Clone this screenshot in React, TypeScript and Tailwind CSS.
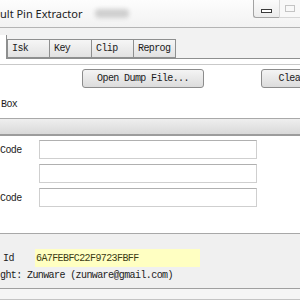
import React from "react";

const mono = "font-['Liberation_Mono',monospace] text-[10px] tracking-[-0.6px] text-[#1b1b1b]";

const Tab = ({ label }: { label: string }) => (
    <div className="-ml-px h-[19px] w-[43px] shrink-0 border border-[#8e8f8f] bg-gradient-to-b from-[#f6f6f6] to-[#e2e2e2] pl-[4px] pt-[3px] leading-[12px]">
        {label}
    </div>
);

const Field = ({ label }: { label?: string }) => (
    <div className="flex h-[19px] items-center">
        <div className="w-[39px] shrink-0 pt-[1px]">{label}</div>
        <div className="h-[19px] w-[218px] shrink-0 border border-[#cfcfcf] border-t-[#b0b0b0] bg-white" />
    </div>
);

const App = () => {
    return (
        <div className={`flex h-[300px] w-[300px] flex-col overflow-hidden bg-white ${mono}`}>
            {/* title bar */}
            <div className="flex h-[28px] shrink-0 items-start border-b border-[#b4b4b4] bg-gradient-to-b from-[#fdfdfd] to-[#f2f2f2]">
                <div className="mt-[6px] font-['Noto_Sans',sans-serif] text-[11px] leading-[16px] tracking-normal text-[#222]">
                    ult Pin Extractor
                </div>
                <div className="ml-[13px] mt-[9px] h-[9px] w-[34px] rounded-sm bg-[#cfcfcf] blur-[2px]" />
                <div className="ml-auto flex">
                    <div className="flex h-[18px] w-[26px] items-center justify-center rounded-bl-[3px] border-b border-l border-[#a3a3a3] bg-gradient-to-b from-[#fbfbfb] to-[#ececec]">
                        <div className="mt-[4px] h-[4px] w-[11px] border border-[#3a3a3a] bg-white" />
                    </div>
                    <div className="flex h-[18px] w-[21px] items-center justify-center border-b border-l border-[#d6d6d6] bg-[#f8f8f8]">
                        <div className="-mt-[1px] h-[7px] w-[10px] border border-[#c4c4c4]" />
                    </div>
                </div>
            </div>

            <div className="h-[7px] shrink-0 bg-[#f2f2f2]" />

            {/* tabs */}
            <div className="flex h-[24px] shrink-0 items-end bg-[#f2f2f2]">
                <div className="h-[24px] w-[7px] shrink-0 border-r border-[#8e8f8f] bg-white" />
                <div className="flex shrink-0 items-end border-b border-[#8e8f8f]">
                    <div className="ml-px" />
                    <Tab label="Isk" />
                    <Tab label="Key" />
                    <Tab label="Clip" />
                    <Tab label="Reprog" />
                </div>
                <div className="h-px flex-1 bg-[#8e8f8f]" />
            </div>

            <div className="h-[5px] shrink-0 bg-white" />

            {/* buttons */}
            <div className="shrink-0 border-t border-[#c9c9c9] bg-white pt-[4px]">
                <div className="flex h-[19px]">
                    <div className="ml-[82px] flex h-[19px] w-[122px] shrink-0 items-center justify-center rounded-[3px] border border-[#8c8c8c] bg-gradient-to-b from-[#f4f4f4] to-[#dcdcdc]">
                        Open Dump File...
                    </div>
                    <div className="ml-[57px] flex h-[19px] w-[62px] shrink-0 items-center justify-center rounded-[3px] border border-[#8c8c8c] bg-gradient-to-b from-[#f4f4f4] to-[#dcdcdc]">
                        Clear
                    </div>
                </div>
                <div className="flex h-[30px] items-center pl-[1px] pt-[3px]">Box</div>
            </div>

            {/* group header */}
            <div className="h-[18px] shrink-0 border-t border-b-2 border-t-[#a9a9a9] border-b-[#9c9c9c] bg-gradient-to-b from-[#efefef] to-[#d9d9d9]" />

            {/* fields */}
            <div className="flex h-[97px] shrink-0 flex-col gap-[5px] bg-white pt-[4px]">
                <Field label="Code" />
                <Field />
                <Field label="Code" />
            </div>

            {/* info panel */}
            <div className="flex h-[56px] shrink-0 flex-col border-y border-t-[#a8a8a8] border-b-[#a0a0a0] bg-[#f0f0f0] pt-[15px]">
                <div className="flex h-[18px] items-center">
                    <div className="w-[35px] shrink-0 pl-[3px]">Id</div>
                    <div className="flex h-[18px] w-[165px] shrink-0 items-center bg-[#ffffc2] pl-[1px] text-[#3c3c14]">
                        6A7FEBFC22F9723FBFF
                    </div>
                </div>
                <div className="mt-[2px] leading-[14px]">ght: Zunware (zunware@gmail.com)</div>
            </div>

            <div className="flex-1 border-b border-[#c4c4c4] bg-[#f5f5f5]" />
        </div>
    );
};

export default App;
